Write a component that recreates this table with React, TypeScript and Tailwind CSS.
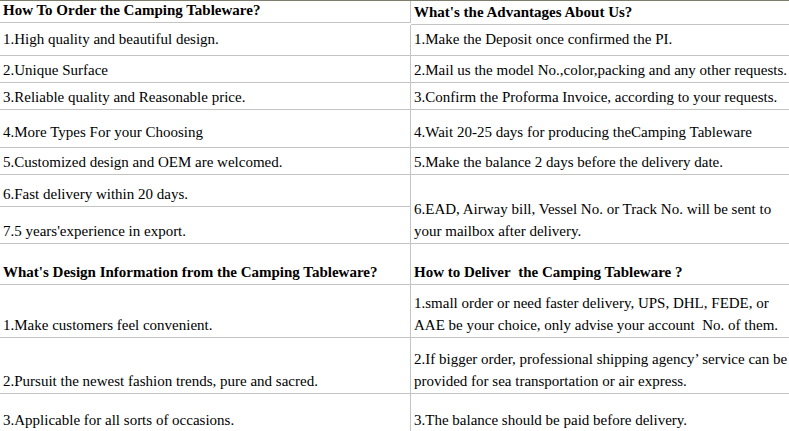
const serif = { fontFamily: '"Liberation Serif", "Times New Roman", serif' };

type Cell = {
  lines: string[];
  bold?: boolean;
  span?: boolean;
};

type Row = {
  h: string;
  pb?: string;
  left: Cell;
  right: Cell | null;
};

const ROWS: Row[] = [
  {
    h: "h-[22px]",
    left: { lines: ["How To Order the Camping Tableware?"], bold: true },
    right: { lines: ["What's the Advantages About Us?"], bold: true },
  },
  {
    h: "h-[31px]",
    pb: "pb-[5px]",
    left: { lines: ["1.High quality and beautiful design."] },
    right: { lines: ["1.Make the Deposit once confirmed the PI."] },
  },
  {
    h: "h-[27px]",
    left: { lines: ["2.Unique Surface"] },
    right: { lines: ["2.Mail us the model No.,color,packing and any other requests."] },
  },
  {
    h: "h-[27px]",
    left: { lines: ["3.Reliable quality and Reasonable price."] },
    right: { lines: ["3.Confirm the Proforma Invoice, according to your requests."] },
  },
  {
    h: "h-[38px]",
    pb: "pb-[4px]",
    left: { lines: ["4.More Types For your Choosing"] },
    right: { lines: ["4.Wait 20-25 days for producing theCamping Tableware"] },
  },
  {
    h: "h-[27px]",
    left: { lines: ["5.Customized design and OEM are welcomed."] },
    right: { lines: ["5.Make the balance 2 days before the delivery date."] },
  },
  {
    h: "h-[32px]",
    left: { lines: ["6.Fast delivery within 20 days."] },
    right: {
      lines: [
        "6.EAD, Airway bill, Vessel No. or Track No. will be sent to",
        "your mailbox after delivery.",
      ],
      span: true,
    },
  },
  {
    h: "h-[37px]",
    left: { lines: ["7.5 years'experience in export."] },
    right: null,
  },
  {
    h: "h-[41px]",
    left: { lines: ["What's Design Information from the Camping Tableware?"], bold: true },
    right: { lines: ["How to Deliver\u00a0 the Camping Tableware ?"], bold: true },
  },
  {
    h: "h-[53px]",
    left: { lines: ["1.Make customers feel convenient."] },
    right: {
      lines: [
        "1.small order or need faster delivery, UPS, DHL, FEDE, or",
        "AAE be your choice, only advise your account\u00a0 No. of them.",
      ],
    },
  },
  {
    h: "h-[56px]",
    left: { lines: ["2.Pursuit the newest fashion trends, pure and sacred."] },
    right: {
      lines: [
        "2.If bigger order, professional shipping agency\u2019 service can be",
        "provided for sea transportation or air express.",
      ],
    },
  },
  {
    h: "h-[39px]",
    left: { lines: ["3.Applicable for all sorts of occasions."] },
    right: { lines: ["3.The balance should be paid before delivery."] },
  },
];

function TextCell({ cell, side, pb }: { cell: Cell; side: "left" | "right"; pb?: string }) {
  return (
    <div
      className={
        "flex flex-col justify-end overflow-hidden border-b border-[#c4c4c4] pl-[3px] text-[15px] leading-[22px] text-black " +
        (pb ?? "pb-[1px]") +
        " " +
        (side === "left" ? "border-r border-r-[#c4c4c4] " : "") +
        (cell.bold ? "font-bold" : "")
      }
    >
      {cell.lines.map((l, i) => (
        <div key={i} className="whitespace-nowrap">
          {l}
        </div>
      ))}
    </div>
  );
}

export default function App() {
  return (
    <div className="h-[431px] w-[789px] overflow-hidden bg-white" style={serif}>
      <div className="border-t border-[#7e7e6e]">
        <div className="grid grid-cols-[411px_378px]">
          {ROWS.map((row, i) => (
            <div key={i} className="contents">
              <div className={row.h + " grid"}>
                <TextCell cell={row.left} side="left" pb={row.pb} />
              </div>
              {row.right && (
                <div className={(row.right.span ? "row-span-2 " : "") + "grid"}>
                  <TextCell cell={row.right} side="right" pb={row.right.span ? undefined : row.pb} />
                </div>
              )}
            </div>
          ))}
        </div>
      </div>
    </div>
  );
}
